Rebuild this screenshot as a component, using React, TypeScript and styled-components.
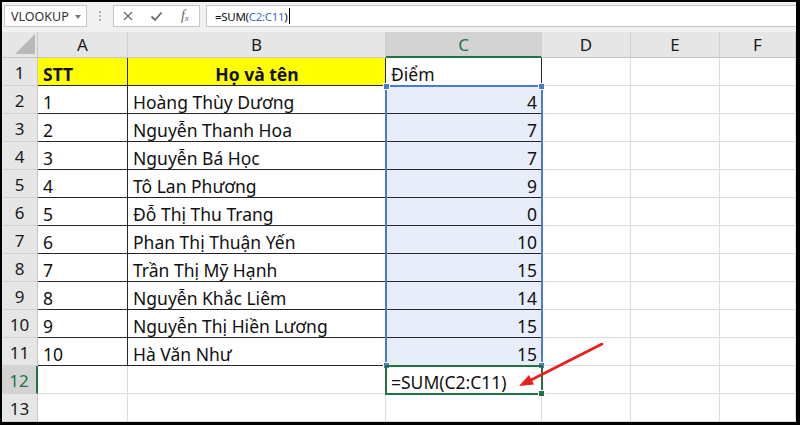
import styled, { createGlobalStyle } from 'styled-components';

const GlobalStyle = createGlobalStyle`
  html, body { margin: 0; padding: 0; background: #fff; }
  body { font-family: "Noto Sans", "DejaVu Sans", sans-serif; }
`;

const GREEN = '#217346';
const BLUE = '#4a7bd1';

const Frame = styled.div`
  position: relative;
  box-sizing: border-box;
  width: 800px;
  height: 425px;
  border-style: solid;
  border-color: #000;
  border-width: 2px 4px 3px 2px;
  overflow: hidden;
  display: flex;
  flex-direction: column;
  background: #fff;
`;

const FormulaBar = styled.div`
  display: flex;
  align-items: flex-start;
  box-sizing: border-box;
  height: 25px;
  padding: 3px 0 0 2px;
  background: #f1f1f1;
`;

const NameBox = styled.div`
  position: relative;
  box-sizing: border-box;
  width: 83px;
  height: 22px;
  background: #fff;
  border: 1px solid #c6c6c6;
  display: flex;
  align-items: center;
  padding-left: 6px;
  font-size: 12.5px;
  color: #333;
`;

const Caret = styled.span`
  position: absolute;
  right: 5px;
  top: 9px;
  width: 0;
  height: 0;
  border-left: 3.5px solid transparent;
  border-right: 3.5px solid transparent;
  border-top: 4px solid #777;
`;

const Dots = styled.div`
  width: 26px;
  height: 22px;
  display: flex;
  flex-direction: column;
  align-items: center;
  justify-content: center;
  gap: 2px;
  span {
    width: 2px;
    height: 2px;
    background: #b0b0b0;
  }
`;

const ButtonsBox = styled.div`
  box-sizing: border-box;
  width: 87px;
  height: 22px;
  background: #fff;
  border: 1px solid #c6c6c6;
  display: grid;
  grid-template-columns: repeat(3, 1fr);
`;

const ToolButton = styled.div`
  display: flex;
  align-items: center;
  justify-content: center;
  color: #666;
`;

const Fx = styled.span`
  font-family: "Liberation Serif", "DejaVu Serif", serif;
  font-style: italic;
  font-size: 14px;
  color: #666;
  line-height: 1;
  sub {
    font-size: 9px;
    vertical-align: -1px;
  }
`;

const FormulaInput = styled.div`
  flex: 1;
  box-sizing: border-box;
  height: 22px;
  margin-left: 6px;
  background: #fff;
  border: 1px solid #c6c6c6;
  border-right: none;
  display: flex;
  align-items: center;
  padding-left: 8px;
  font-size: 11.5px;
  letter-spacing: -0.3px;
  color: #111;
`;

const Ref = styled.span`
  color: #3b6cc6;
`;

const TextCursor = styled.span`
  display: inline-block;
  width: 1px;
  height: 16px;
  margin-left: 2px;
  background: #000;
`;

const Band = styled.div`
  height: 9px;
  background: #f1f1f1;
`;

const Sheet = styled.div`
  position: relative;
  display: grid;
  grid-template-columns: 36px 90px 258px 156px 89px 89px 1fr;
  grid-template-rows: 26px;
  grid-auto-rows: 28px;
  font-size: 17.5px;
  color: #111;
`;

const Corner = styled.div`
  position: relative;
  box-sizing: border-box;
  background: #e6e6e6;
  border-right: 1px solid #c6c6c6;
  border-bottom: 1px solid #c6c6c6;
  &::after {
    content: '';
    position: absolute;
    right: 2px;
    bottom: 3px;
    width: 0;
    height: 0;
    border-left: 20px solid transparent;
    border-bottom: 20px solid #b8b8b8;
  }
`;

const ColHead = styled.div<{ $active?: boolean }>`
  box-sizing: border-box;
  display: flex;
  align-items: center;
  justify-content: center;
  font-size: 17px;
  background: ${(p) => (p.$active ? '#d3d3d3' : '#e6e6e6')};
  color: ${(p) => (p.$active ? GREEN : '#1a1a1a')};
  border-right: 1px solid #cfcfcf;
  border-bottom: ${(p) => (p.$active ? `2px solid ${GREEN}` : '1px solid #c6c6c6')};
`;

const RowHead = styled.div<{ $active?: boolean }>`
  box-sizing: border-box;
  display: flex;
  align-items: center;
  justify-content: center;
  font-size: 17px;
  padding-top: 1px;
  background: ${(p) => (p.$active ? '#d3d3d3' : '#e6e6e6')};
  color: ${(p) => (p.$active ? GREEN : '#1a1a1a')};
  border-right: ${(p) => (p.$active ? `2px solid ${GREEN}` : '1px solid #c6c6c6')};
  border-bottom: 1px solid #d2d2d2;
`;

const Cell = styled.div<{
  $boxed?: boolean;
  $fill?: string;
  $align?: 'left' | 'center' | 'right';
  $bold?: boolean;
}>`
  box-sizing: border-box;
  display: flex;
  align-items: flex-end;
  justify-content: ${(p) =>
    p.$align === 'right' ? 'flex-end' : p.$align === 'center' ? 'center' : 'flex-start'};
  padding: 0 4px 0 5px;
  line-height: 22px;
  white-space: nowrap;
  font-weight: ${(p) => (p.$bold ? 700 : 400)};
  background: ${(p) => p.$fill || 'transparent'};
  border-right: 1px solid ${(p) => (p.$boxed ? '#262626' : '#dcdcdc')};
  border-bottom: 1px solid ${(p) => (p.$boxed ? '#262626' : '#dcdcdc')};
`;

const Selection = styled.div`
  position: absolute;
  grid-column: 4 / 5;
  grid-row: 3 / 13;
  top: -1px;
  left: -1px;
  right: -1px;
  bottom: -1px;
  border: 2px solid ${BLUE};
  pointer-events: none;
`;

const ActiveCell = styled.div`
  position: absolute;
  grid-column: 4 / 5;
  grid-row: 13 / 14;
  top: -1px;
  left: -1px;
  right: -1px;
  bottom: -1px;
  border: 2px solid ${GREEN};
  pointer-events: none;
`;

const Handle = styled.span<{ $color: string; $x: 'l' | 'r'; $y: 't' | 'b' }>`
  position: absolute;
  width: 5px;
  height: 5px;
  background: ${(p) => p.$color};
  border: 1px solid #fff;
  ${(p) => (p.$x === 'l' ? 'left: -4px;' : 'right: -4px;')}
  ${(p) => (p.$y === 't' ? 'top: -4px;' : 'bottom: -4px;')}
`;

const ArrowLayer = styled.svg`
  position: absolute;
  left: -2px;
  top: -2px;
  pointer-events: none;
`;

const rows: [string, string, string][] = [
  ['1', 'Hoàng Thùy Dương', '4'],
  ['2', 'Nguyễn Thanh Hoa', '7'],
  ['3', 'Nguyễn Bá Học', '7'],
  ['4', 'Tô Lan Phương', '9'],
  ['5', 'Đỗ Thị Thu Trang', '0'],
  ['6', 'Phan Thị Thuận Yến', '10'],
  ['7', 'Trần Thị Mỹ Hạnh', '15'],
  ['8', 'Nguyễn Khắc Liêm', '14'],
  ['9', 'Nguyễn Thị Hiền Lương', '15'],
  ['10', 'Hà Văn Như', '15'],
];

const columns = ['A', 'B', 'C', 'D', 'E', 'F'];
const SEL_FILL = '#e8eef9';

function EmptyTail() {
  return (
    <>
      <Cell />
      <Cell />
      <Cell />
    </>
  );
}

function RowGroup({ n, stt, name, score }: { n: number; stt: string; name: string; score: string }) {
  return (
    <>
      <RowHead>{n}</RowHead>
      <Cell $boxed>{stt}</Cell>
      <Cell $boxed>{name}</Cell>
      <Cell $boxed $fill={SEL_FILL} $align="right">
        {score}
      </Cell>
      <EmptyTail />
    </>
  );
}

export default function App() {
  return (
    <>
      <GlobalStyle />
      <Frame>
        <FormulaBar>
          <NameBox>
            VLOOKUP
            <Caret />
          </NameBox>
          <Dots>
            <span />
            <span />
            <span />
          </Dots>
          <ButtonsBox>
            <ToolButton>
              <svg width="12" height="12" viewBox="0 0 12 12">
                <path d="M2 2 L10 10 M10 2 L2 10" stroke="#6a6a6a" strokeWidth="1.3" fill="none" />
              </svg>
            </ToolButton>
            <ToolButton>
              <svg width="13" height="11" viewBox="0 0 13 11">
                <path d="M1.5 5.5 L5 9 L11.5 1.5" stroke="#6a6a6a" strokeWidth="1.8" fill="none" />
              </svg>
            </ToolButton>
            <ToolButton>
              <Fx>
                f<sub>x</sub>
              </Fx>
            </ToolButton>
          </ButtonsBox>
          <FormulaInput>
            =SUM(<Ref>C2:C11</Ref>)
            <TextCursor />
          </FormulaInput>
        </FormulaBar>
        <Band />
        <Sheet>
          <Corner />
          {columns.map((c) => (
            <ColHead key={c} $active={c === 'C'}>
              {c}
            </ColHead>
          ))}

          <RowHead>1</RowHead>
          <Cell $boxed $fill="#ffff00" $bold>
            STT
          </Cell>
          <Cell $boxed $fill="#ffff00" $bold $align="center">
            Họ và tên
          </Cell>
          <Cell $boxed>Điểm</Cell>
          <EmptyTail />

          {rows.map(([stt, name, score], i) => (
            <RowGroup key={stt} n={i + 2} stt={stt} name={name} score={score} />
          ))}

          <RowHead $active>12</RowHead>
          <Cell />
          <Cell />
          <Cell>=SUM(C2:C11)</Cell>
          <EmptyTail />

          <RowHead>13</RowHead>
          <Cell />
          <Cell />
          <Cell />
          <EmptyTail />

          <Selection>
            <Handle $color={BLUE} $x="l" $y="t" />
            <Handle $color={BLUE} $x="r" $y="t" />
            <Handle $color={BLUE} $x="l" $y="b" />
            <Handle $color={BLUE} $x="r" $y="b" />
          </Selection>
          <ActiveCell>
            <Handle $color={GREEN} $x="r" $y="b" />
          </ActiveCell>
        </Sheet>

        <ArrowLayer width="800" height="425" viewBox="0 0 800 425">
          <line x1="602" y1="344" x2="531" y2="380" stroke="#e5201b" strokeWidth="2.6" strokeLinecap="round" />
          <polygon points="519,386 534,384.5 529,375" fill="#e5201b" />
        </ArrowLayer>
      </Frame>
    </>
  );
}
